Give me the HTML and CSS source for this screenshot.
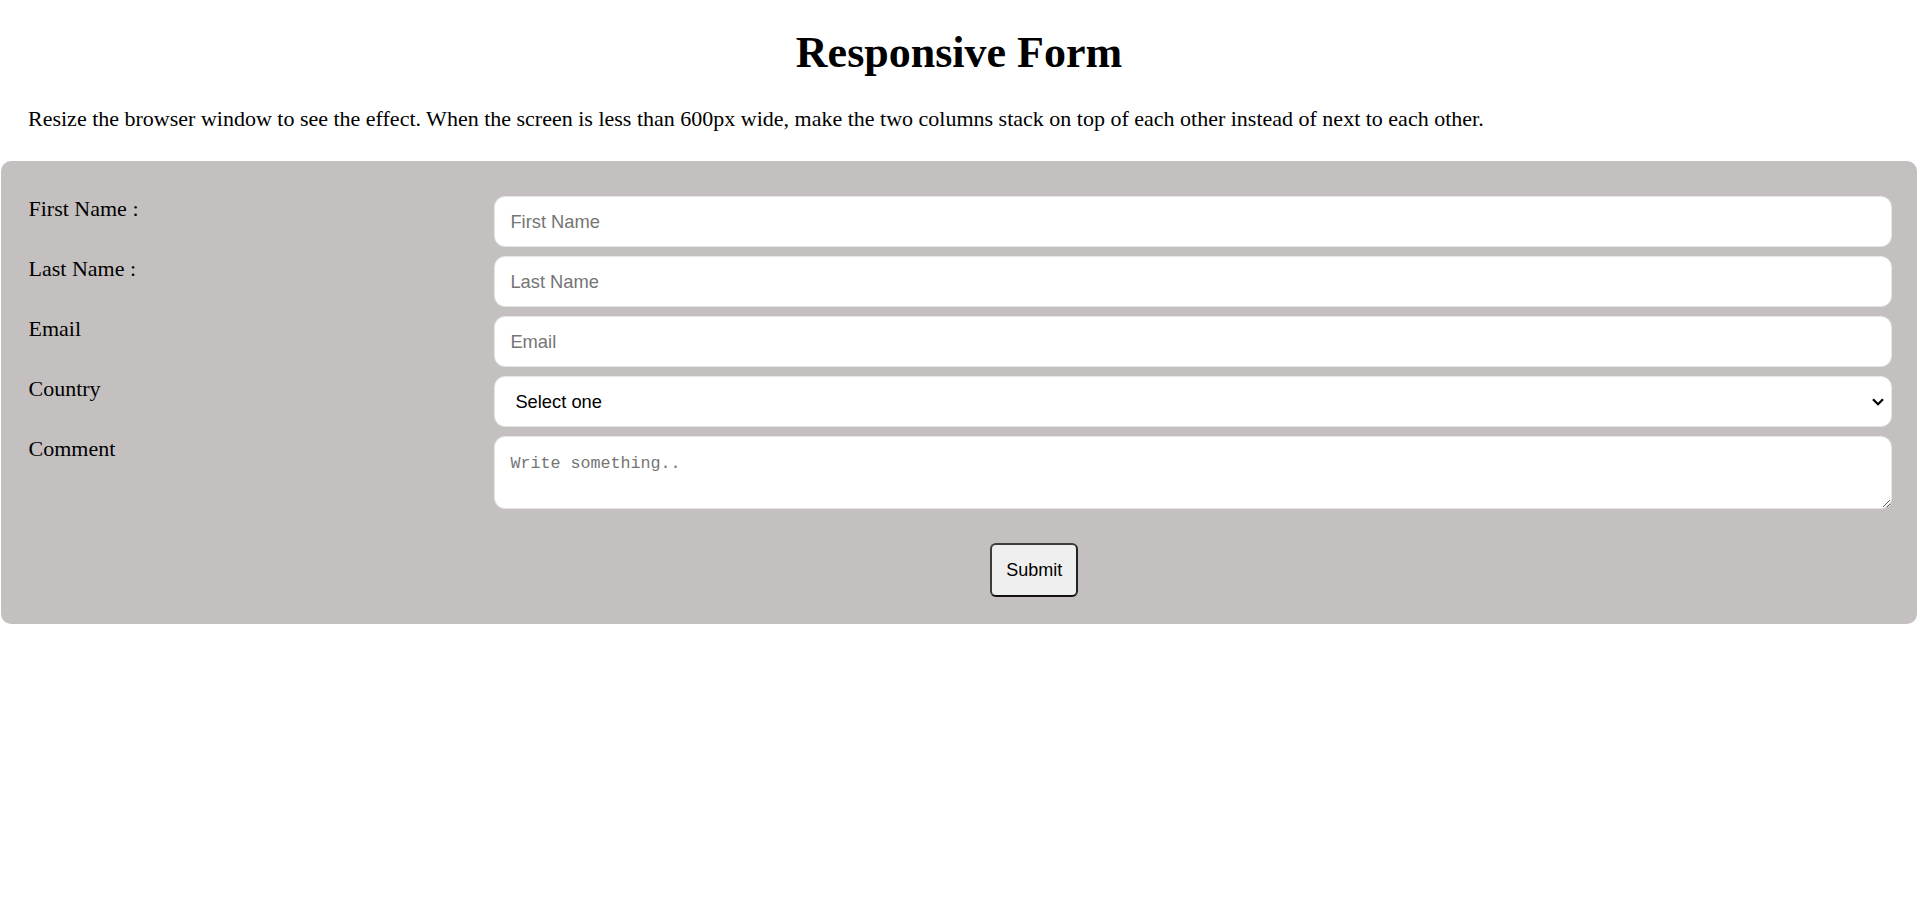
FILE: index.html
```html
<!DOCTYPE html>
<html lang="en">
<head>
<meta charset="utf-8">
<title>Responsive Form</title>
<link rel="stylesheet" href="styles.css">
</head>
<body>
<h1 class="title">Responsive Form</h1>
<p class="intro">Resize the browser window to see the effect. When the screen is less than 600px wide, make the two columns stack on top of each other instead of next to each other.</p>
<div class="container">
  <form class="form">
    <div class="row">
      <label class="label" for="fname">First Name :</label>
      <input class="field" type="text" id="fname" placeholder="First Name">
    </div>
    <div class="row">
      <label class="label" for="lname">Last Name :</label>
      <input class="field" type="text" id="lname" placeholder="Last Name">
    </div>
    <div class="row">
      <label class="label" for="email">Email</label>
      <input class="field" type="text" id="email" placeholder="Email">
    </div>
    <div class="row">
      <label class="label" for="country">Country</label>
      <div class="select-wrap">
        <select class="field select" id="country">
          <option>Select one</option>
          <option>Australia</option>
          <option>Canada</option>
          <option>USA</option>
        </select>
        <svg class="chevron" width="12" height="8" viewBox="0 0 12 8"><path d="M1 1.2 L6 6.2 L11 1.2" fill="none" stroke="#000" stroke-width="2.2"/></svg>
      </div>
    </div>
    <div class="row">
      <label class="label" for="comment">Comment</label>
      <textarea class="field area" id="comment" placeholder="Write something.."></textarea>
    </div>
    <div class="submit-row">
      <button class="submit" type="button">Submit</button>
    </div>
  </form>
</div>
</body>
</html>
```

FILE: styles.css
```css
* {
  box-sizing: border-box;
}

html, body {
  margin: 0;
  padding: 0;
  background: #ffffff;
}

body {
  font-family: "Liberation Serif", "Times New Roman", serif;
  font-size: 22px;
  color: #000;
}

.title {
  margin: 0;
  padding-top: 28px;
  font-size: 44px;
  line-height: 50px;
  font-weight: bold;
  text-align: center;
}

.intro {
  margin: 28px 0 0 0;
  padding: 0 28px;
  line-height: 26px;
}

.container {
  margin: 29px 1px 0 1px;
  background-color: #c4c0bf;
  border-radius: 10px;
  padding: 35px 25px 27px 27.5px;
}

.form {
  display: flex;
  flex-direction: column;
  gap: 9px;
}

.row {
  display: grid;
  grid-template-columns: 25% 75%;
  align-items: start;
}

.label {
  display: block;
  line-height: 26px;
}

.field {
  width: 100%;
  height: 51px;
  margin: 0;
  padding: 0 15px;
  border: 1px solid #e6e6e6;
  border-radius: 11px;
  background: #fff;
  font-family: "Liberation Sans", Arial, sans-serif;
  font-size: 18.33px;
  color: #000;
  outline: none;
}

.field::placeholder {
  color: #757575;
}

.select-wrap {
  position: relative;
}

.select {
  appearance: none;
  -webkit-appearance: none;
  padding-left: 20px;
}

.chevron {
  position: absolute;
  right: 8px;
  top: 22px;
  pointer-events: none;
}

.area {
  height: 73px;
  padding: 16.5px 15px;
  font-family: "Liberation Mono", "DejaVu Sans Mono", monospace;
  font-size: 16.7px;
  resize: vertical;
}

.submit-row {
  padding-top: 25px;
  padding-left: calc(50% + 30px);
  display: flex;
}

.submit {
  width: 88px;
  height: 54px;
  background: #efefef;
  border: 2px solid #3c3c3c;
  border-bottom-color: #111;
  border-right-color: #222;
  border-radius: 6px;
  font-family: "Liberation Sans", Arial, sans-serif;
  font-size: 18px;
  color: #000;
  padding: 0;
}
```
